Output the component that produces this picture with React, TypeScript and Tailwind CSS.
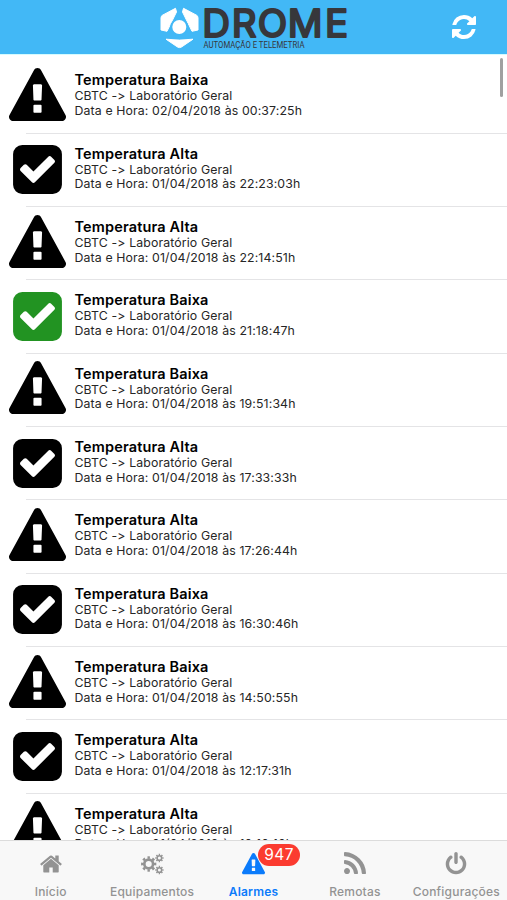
import type { ReactNode } from "react"
import clsx from "clsx"

type Status = "warning" | "checked" | "resolved"

type Alarm = {
  title: string
  time: string
  status: Status
}

const alarms: Alarm[] = [
  { title: "Temperatura Baixa", time: "02/04/2018 às 00:37:25h", status: "warning" },
  { title: "Temperatura Alta", time: "01/04/2018 às 22:23:03h", status: "checked" },
  { title: "Temperatura Alta", time: "01/04/2018 às 22:14:51h", status: "warning" },
  { title: "Temperatura Baixa", time: "01/04/2018 às 21:18:47h", status: "resolved" },
  { title: "Temperatura Baixa", time: "01/04/2018 às 19:51:34h", status: "warning" },
  { title: "Temperatura Alta", time: "01/04/2018 às 17:33:33h", status: "checked" },
  { title: "Temperatura Alta", time: "01/04/2018 às 17:26:44h", status: "warning" },
  { title: "Temperatura Baixa", time: "01/04/2018 às 16:30:46h", status: "checked" },
  { title: "Temperatura Baixa", time: "01/04/2018 às 14:50:55h", status: "warning" },
  { title: "Temperatura Alta", time: "01/04/2018 às 12:17:31h", status: "checked" },
  { title: "Temperatura Alta", time: "01/04/2018 às 10:10:10h", status: "warning" },
]

const paths = {
  warning:
    "M1024 1375v-190q0-14-9.5-23.5t-22.5-9.5h-192q-13 0-22.5 9.5t-9.5 23.5v190q0 14 9.5 23.5t22.5 9.5h192q13 0 22.5-9.5t9.5-23.5zm-2-374l18-459q0-12-10-19-13-11-24-11h-220q-11 0-24 11-10 7-10 21l17 457q0 10 10 16.5t24 6.5h185q14 0 23.5-6.5t10.5-16.5zm-14-934l768 1408q35 63-2 126-17 29-46.5 46t-63.5 17h-1536q-34 0-63.5-17t-46.5-46q-37-63-2-126l768-1408q17-31 47-49t65-18 65 18 47 49z",
  check:
    "M813 1299l614-614q19-19 19-45t-19-45l-102-102q-19-19-45-19t-45 19l-467 467-211-211q-19-19-45-19t-45 19l-102 102q-19 19-19 45t19 45l358 358q19 19 45 19t45-19zm851-883v960q0 119-84.5 203.5t-203.5 84.5h-960q-119 0-203.5-84.5t-84.5-203.5v-960q0-119 84.5-203.5t203.5-84.5h960q119 0 203.5 84.5t84.5 203.5z",
  refresh:
    "M1639 1056q0 5-1 7-64 268-268 434.5t-478 166.5q-146 0-282.5-55t-243.5-157l-129 129q-19 19-45 19t-45-19-19-45v-448q0-26 19-45t45-19h448q26 0 45 19t19 45-19 45l-137 137q71 66 161 102t187 36q134 0 250-65t186-179q11-17 53-117 8-23 30-23h192q13 0 22.5 9.5t9.5 22.5zm25-800v448q0 26-19 45t-45 19h-448q-26 0-45-19t-19-45 19-45l138-138q-148-137-349-137-134 0-250 65t-186 179q-11 17-53 117-8 23-30 23h-199q-13 0-22.5-9.5t-9.5-22.5v-7q65-268 270-434.5t480-166.5q146 0 284 55.5t245 156.5l130-129q19-19 45-19t45 19 19 45z",
  home:
    "M1472 992v480q0 26-19 45t-45 19h-384v-384h-256v384h-384q-26 0-45-19t-19-45v-480q0-1 .5-3t.5-3l575-474 575 474q1 2 1 6zm223-69l-62 74q-8 9-21 11h-3q-13 0-21-7l-692-577-692 577q-12 8-24 7-13-2-21-11l-62-74q-8-10-7-23.5t11-21.5l719-599q32-26 76-26t76 26l244 204v-195q0-14 9-23t23-9h192q14 0 23 9t9 23v408l219 182q10 8 11 21.5t-7 23.5z",
  rss:
    "M576 1344q0 80-56 136t-136 56-136-56-56-136 56-136 136-56 136 56 56 136zm512 123q2 28-17 48-18 21-47 21h-135q-25 0-43-16.5t-20-41.5q-22-229-184.5-391.5t-391.5-184.5q-25-2-41.5-20t-16.5-43v-135q0-29 21-47 17-17 43-17h5q160 13 306 80.5t259 181.5q114 113 181.5 259t80.5 306zm512 2q2 27-18 47-18 20-46 20h-143q-26 0-44.5-17.5t-19.5-42.5q-12-215-101-408.5t-231.5-336-336-231.5-408.5-102q-25-1-42.5-19.5t-17.5-43.5v-143q0-28 20-46 18-18 44-18h3q262 13 501.5 120t425.5 294q187 186 294 425.5t120 501.5z",
  power:
    "M1664 896q0 156-61 298t-164 245-245 164-298 61-298-61-245-164-164-245-61-298q0-182 80.5-343t226.5-270q43-32 95.5-25t83.5 50q32 42 24.5 94.5t-49.5 84.5q-98 74-151.5 181t-53.5 228q0 104 40.5 198.5t109.5 163.5 163.5 109.5 198.5 40.5 198.5-40.5 163.5-109.5 109.5-163.5 40.5-198.5q0-121-53.5-228t-151.5-181q-42-32-49.5-84.5t24.5-94.5q31-43 84-50t95 25q146 109 226.5 270t80.5 343zm-640-768v640q0 52-38 90t-90 38-90-38-38-90v-640q0-52 38-90t90-38 90 38 38 90z",
}

function Icon({ name, className }: { name: keyof typeof paths; className: string }) {
  return (
    <svg viewBox="0 0 1792 1792" fill="currentColor" className={className}>
      <path d={paths[name]} />
    </svg>
  )
}

function Gear({ x, y, r, width }: { x: number; y: number; r: number; width: number }) {
  return (
    <g transform={`translate(${x} ${y})`} fill="none" stroke="currentColor">
      <circle r={r} strokeWidth={width} />
      {/* eight teeth */}
      <circle
        r={r + width * 0.75}
        strokeWidth={width * 0.9}
        pathLength={16}
        strokeDasharray="1 1"
        strokeDashoffset={0.5}
      />
    </g>
  )
}

function GearsIcon() {
  return (
    <svg viewBox="0 0 24 24" className="size-6">
      <Gear x={8.7} y={12} r={4.4} width={2.7} />
      <Gear x={19.4} y={6} r={2.3} width={1.6} />
      <Gear x={19.4} y={18} r={2.3} width={1.6} />
    </svg>
  )
}

function Logo() {
  return (
    <svg viewBox="0 0 190 54" className="w-[190px] h-[54px]">
      <g fill="#fff" stroke="#fff" strokeWidth="1" strokeLinejoin="round">
        <path d="M15.5 8.3 L2.5 15.2 Q1 16 1 18 V30 L7 31.3 L16.5 12 Z" />
        <path d="M23.5 8.3 L36.5 15.2 Q38 16 38 18 V30 L32 31.3 L22.5 12 Z" />
        <path d="M6 39.2 Q19.5 41 33 39.2 L21.5 47 Q19.5 48.2 17.5 47 Z" />
      </g>
      {/* blue ring keeps the hub apart from the blades */}
      <circle cx="19.3" cy="27" r="8" fill="#fff" stroke="#42b8f6" strokeWidth="2" />
      <g fill="#37373b">
        <text
          x="42.2 71.7 97.8 127.7 165"
          y="36.6"
          fontSize="38.5"
          fontWeight="400"
          fontFamily="Inter, sans-serif"
          stroke="#37373b"
          strokeWidth="2.1"
          strokeLinejoin="round"
        >
          DROME
        </text>
        <text x="43.5" y="47.5" fontSize="8.3" fontFamily="Roboto, sans-serif" textLength="101" lengthAdjust="spacingAndGlyphs">
          AUTOMAÇÃO E TELEMETRIA
        </text>
      </g>
    </svg>
  )
}

function AlarmRow({ alarm }: { alarm: Alarm }) {
  return (
    <li className="h-[73.33px] shrink-0 flex flex-col">
      <div className="flex-1 flex items-center pl-[9px]">
        <Icon
          name={alarm.status === "warning" ? "warning" : "check"}
          className={clsx("size-[57px] shrink-0", alarm.status === "resolved" ? "text-[#229322]" : "text-black")}
        />
        <div className="pl-[8.5px] pb-[3px] text-[12.3px] leading-[14.7px] tracking-[0.13px] text-[#262626] whitespace-nowrap">
          <h2 className="text-[14.5px] leading-[18px] tracking-[0.15px] font-semibold text-black">{alarm.title}</h2>
          <p>CBTC -&gt; Laboratório Geral</p>
          <p>Data e Hora: {alarm.time}</p>
        </div>
      </div>
      <div className="ml-[26px] h-px bg-[#e4e4e6]" />
    </li>
  )
}

function Tab({ label, active, children }: { label: string; active?: boolean; children: ReactNode }) {
  return (
    <button
      className={clsx(
        "flex-1 flex flex-col items-center pt-[11px] text-[12px] leading-[16px] tracking-[0.2px] whitespace-nowrap",
        active ? "text-[#0b7bfb] font-semibold" : "text-[#939393] font-medium"
      )}
    >
      <span className="relative flex h-6 items-center justify-center">{children}</span>
      <span className="mt-2">{label}</span>
    </button>
  )
}

export default function App() {
  return (
    <div className="relative h-[900px] w-[507px] flex flex-col overflow-hidden bg-white font-['Inter',sans-serif]">
      <header className="h-[54px] shrink-0 flex items-start justify-between bg-[#42b8f6] pl-[160px] pr-[29px]">
        <Logo />
        <button className="pt-[13px] text-white">
          <Icon name="refresh" className="size-[28px]" />
        </button>
      </header>

      <main className="relative flex-1 min-h-0 overflow-hidden border-t border-[#d5fbff] pt-[5.4px]">
        <ul className="flex flex-col">
          {alarms.map((alarm) => (
            <AlarmRow key={alarm.time} alarm={alarm} />
          ))}
        </ul>
        {/* scroll indicator */}
        <div className="absolute right-[4px] top-[3px] h-[39px] w-[3px] rounded-full bg-[#a0a0a0]" />
      </main>

      <nav className="h-[60px] shrink-0 flex border-t border-[#dcdcdc] bg-[#f8f8f8]">
        <Tab label="Início">
          <Icon name="home" className="size-6" />
        </Tab>
        <Tab label="Equipamentos">
          <GearsIcon />
        </Tab>
        <Tab label="Alarmes" active>
          <Icon name="warning" className="size-[23px]" />
          <span className="absolute left-[16px] -top-[8px] flex h-[22px] w-[42px] items-center justify-center rounded-full bg-[#fb3b30] text-[15.5px] font-normal tracking-[0.4px] text-white">
            947
          </span>
        </Tab>
        <Tab label="Remotas">
          <Icon name="rss" className="size-[28px]" />
        </Tab>
        <Tab label="Configurações">
          <Icon name="power" className="size-6" />
        </Tab>
      </nav>
    </div>
  )
}
